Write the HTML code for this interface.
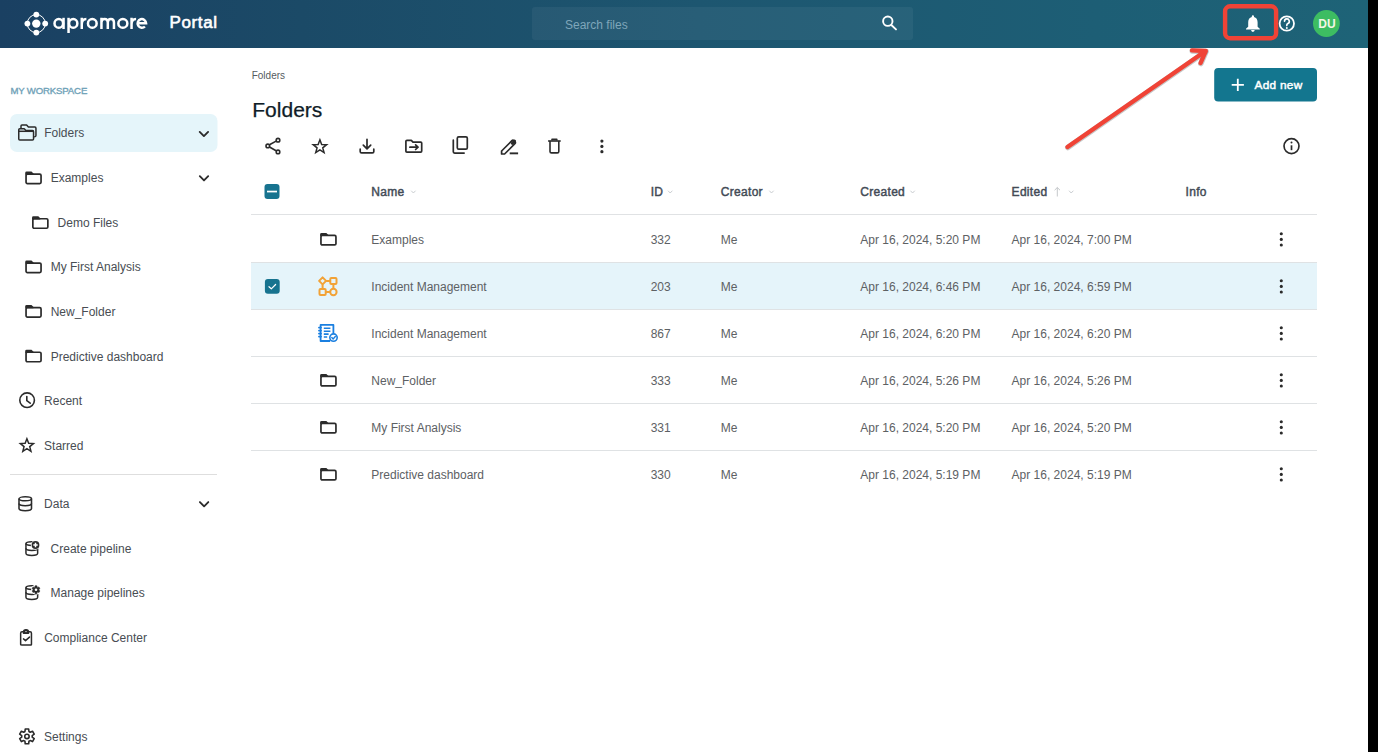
<!DOCTYPE html>
<html><head><meta charset="utf-8"><title>Apromore Portal</title>
<style>
html,body{margin:0;padding:0;}
body{width:1378px;height:752px;overflow:hidden;background:#000;position:relative;font-family:"Liberation Sans",sans-serif;}
.page{position:absolute;left:0;top:0;width:1368px;height:752px;background:#fff;}
.t{position:absolute;white-space:nowrap;}
svg{position:absolute;left:0;top:0;}
</style></head><body>
<div class="page"></div>
<svg width="1378" height="752" viewBox="0 0 1378 752">
<defs><linearGradient id="hg" x1="0" y1="0" x2="1" y2="0"><stop offset="0" stop-color="#1a4062"/><stop offset="0.22" stop-color="#1b4a67"/><stop offset="0.51" stop-color="#1d5670"/><stop offset="0.8" stop-color="#1d5e75"/><stop offset="1" stop-color="#1e6377"/></linearGradient></defs>
<rect x="0" y="0" width="1368" height="48" fill="url(#hg)"/>
<rect x="532" y="7" width="381" height="33" rx="3" fill="#ffffff" fill-opacity="0.05"/>
<g fill="#fff"><circle cx="36.3" cy="23.6" r="4.2"/><circle cx="36.3" cy="14.6" r="2.9"/><circle cx="36.3" cy="32.6" r="2.9"/><circle cx="27.4" cy="23.6" r="2.9"/><circle cx="45.2" cy="23.6" r="2.9"/></g><circle cx="36.3" cy="23.6" r="9" fill="none" stroke="#fff" stroke-width="1"/>
<g fill="none" stroke="#fff" stroke-width="2.5"><ellipse cx="58.8" cy="23.4" rx="4.3" ry="4.35"/><path d="M63.55 17.8 V29.05"/><ellipse cx="73.2" cy="23.4" rx="4.15" ry="4.35"/><path d="M68.55 17.8 V33"/><path d="M81.75 17.8 V29.05 M81.75 24.2 Q81.75 19.05 86.4 19.05"/><ellipse cx="92.3" cy="23.4" rx="4.35" ry="4.35"/><path d="M101.45 17.8 V29.05 M101.45 22.6 Q101.45 19.05 104.6 19.05 Q107.8 19.05 107.8 22.6 V29.05 M107.8 22.6 Q107.8 19.05 110.9 19.05 Q113.95 19.05 113.95 22.6 V29.05"/><ellipse cx="122.85" cy="23.4" rx="4.5" ry="4.35"/><path d="M131.55 17.8 V29.05 M131.55 24.2 Q131.55 19.05 136.1 19.05"/><path d="M137.6 23.3 H146.1 A4.25 4.35 0 1 0 144.9 26.5"/></g>
<g fill="none" stroke="#fff" stroke-width="1.9" stroke-linecap="round"><circle cx="887.8" cy="21.2" r="4.7"/><path d="M891.6 25.2 L896 29.4"/></g>
<path fill="#fff" d="M1252.9 15.2 a1.1 1.1 0 0 1 1.1 1.1 v0.8 c2.4 0.6 3.6 2.6 3.6 5.2 v4.4 l2.2 2.0 v0.7 h-13.8 v-0.7 l2.2 -2.0 v-4.4 c0 -2.6 1.2 -4.6 3.6 -5.2 v-0.8 a1.1 1.1 0 0 1 1.1 -1.1 z M1251.1 30.1 h3.6 a1.8 1.8 0 0 1 -3.6 0 z"/>
<circle cx="1286.8" cy="23.5" r="7.2" fill="none" stroke="#fff" stroke-width="1.8"/><path d="M1284.5 21.3 a2.4 2.4 0 1 1 3.4 2.2 c-0.7 0.4 -1.1 0.9 -1.1 1.6 v0.5" fill="none" stroke="#fff" stroke-width="1.65" stroke-linecap="round"/><circle cx="1286.8" cy="27.9" r="1.0" fill="#fff"/>
<circle cx="1326.4" cy="23.5" r="13.4" fill="#3dbd62"/>
<rect x="1225.1" y="6.3" width="51.0" height="31.9" rx="5" fill="none" stroke="#f04336" stroke-width="4.4"/>
<rect x="10" y="114" width="207.5" height="38" rx="7" fill="#e5f5fa"/>
<rect x="10" y="474" width="207" height="1" fill="#dedede"/>
<g fill="none" stroke="#2b2b2b" stroke-width="1.5" stroke-linejoin="round"><path d="M21.0 128.2 V126.0 Q21.0 125.05 21.95 125.05 H26.6 L28.4 127.1 H34.9 Q35.95 127.1 35.95 128.15 V135.6 Q35.95 136.65 34.9 136.65 H34.2"/><path d="M18.75 138.9 V129.75 Q18.75 128.8 19.7 128.8 H24.2 L25.9 130.6 H32.5 Q33.55 130.6 33.55 131.65 V138.9 Q33.55 139.95 32.5 139.95 H19.8 Q18.75 139.95 18.75 138.9 Z"/><path d="M18.75 131.3 H33.55"/></g>
<path d="M199.70 131.90 L203.90 136.10 L208.10 131.90" fill="none" stroke="#2b2b2b" stroke-width="1.85" stroke-linecap="round" stroke-linejoin="round"/>
<g transform="translate(25.2,171.6)"><path d="M0 3.2 V1.4 Q0 0 1.4 0 H6.3 L8.3 2.0 V3.2 Z" fill="#2b2b2b"/><rect x="0.85" y="2.55" width="15.0" height="9.5" rx="1.3" fill="none" stroke="#2b2b2b" stroke-width="1.7"/></g>
<path d="M199.80 176.20 L204.00 180.40 L208.20 176.20" fill="none" stroke="#2b2b2b" stroke-width="1.85" stroke-linecap="round" stroke-linejoin="round"/>
<g transform="translate(32.0,216.2)"><path d="M0 3.2 V1.4 Q0 0 1.4 0 H6.3 L8.3 2.0 V3.2 Z" fill="#2b2b2b"/><rect x="0.85" y="2.55" width="15.0" height="9.5" rx="1.3" fill="none" stroke="#2b2b2b" stroke-width="1.7"/></g>
<g transform="translate(25.2,260.5)"><path d="M0 3.2 V1.4 Q0 0 1.4 0 H6.3 L8.3 2.0 V3.2 Z" fill="#2b2b2b"/><rect x="0.85" y="2.55" width="15.0" height="9.5" rx="1.3" fill="none" stroke="#2b2b2b" stroke-width="1.7"/></g>
<g transform="translate(25.2,305.1)"><path d="M0 3.2 V1.4 Q0 0 1.4 0 H6.3 L8.3 2.0 V3.2 Z" fill="#2b2b2b"/><rect x="0.85" y="2.55" width="15.0" height="9.5" rx="1.3" fill="none" stroke="#2b2b2b" stroke-width="1.7"/></g>
<g transform="translate(25.2,349.7)"><path d="M0 3.2 V1.4 Q0 0 1.4 0 H6.3 L8.3 2.0 V3.2 Z" fill="#2b2b2b"/><rect x="0.85" y="2.55" width="15.0" height="9.5" rx="1.3" fill="none" stroke="#2b2b2b" stroke-width="1.7"/></g>
<g fill="none" stroke="#2b2b2b" stroke-width="1.6" stroke-linecap="round"><circle cx="27.1" cy="400.2" r="7.3"/><path d="M26.8 396.6 V400.6 L30.2 403.2"/></g>
<polygon points="26.90,438.80 28.66,443.27 33.46,443.57 29.75,446.63 30.96,451.28 26.90,448.70 22.84,451.28 24.05,446.63 20.34,443.57 25.14,443.27" fill="none" stroke="#2b2b2b" stroke-width="1.5" stroke-linejoin="miter" stroke-miterlimit="10"/>
<g transform="translate(18.2,496.0)" fill="none" stroke="#2b2b2b" stroke-width="1.55"><ellipse cx="7.05" cy="2.8" rx="6.25" ry="2.0"/><path d="M0.8 2.8 V12.5 A6.25 2.2 0 0 0 13.3 12.5 V2.8"/><path d="M0.8 7.5 A6.25 2.2 0 0 0 13.3 7.5"/></g>
<path d="M199.90 502.10 L204.10 506.30 L208.30 502.10" fill="none" stroke="#2b2b2b" stroke-width="1.85" stroke-linecap="round" stroke-linejoin="round"/>
<g transform="translate(0,0)" fill="none" stroke="#2b2b2b" stroke-width="1.5"><ellipse cx="31.8" cy="543.55" rx="5.85" ry="1.9"/><path d="M25.95 543.55 V553.2 A5.85 2.2 0 0 0 37.65 553.2 V547.8"/><path d="M25.95 548.3 A5.85 2.2 0 0 0 37.65 548.3"/></g><circle cx="35.5" cy="545.0" r="4.7" fill="#fff"/><circle cx="35.5" cy="545.0" r="3.9" fill="#2b2b2b"/><path d="M35.5 542.8 V547.2 M33.3 545.0 H37.7" stroke="#fff" stroke-width="1.5"/>
<g transform="translate(0,44.0)" fill="none" stroke="#2b2b2b" stroke-width="1.5"><ellipse cx="31.8" cy="543.55" rx="5.85" ry="1.9"/><path d="M25.95 543.55 V553.2 A5.85 2.2 0 0 0 37.65 553.2 V547.8"/><path d="M25.95 548.3 A5.85 2.2 0 0 0 37.65 548.3"/></g><circle cx="36.0" cy="589.75" r="4.9" fill="#fff"/><path d="M34.82 587.10 L35.01 585.77 L36.99 585.77 L37.18 587.10 L37.70 587.40 L38.95 586.90 L39.94 588.62 L38.88 589.45 L38.88 590.05 L39.94 590.88 L38.95 592.60 L37.70 592.10 L37.18 592.40 L36.99 593.73 L35.01 593.73 L34.82 592.40 L34.30 592.10 L33.05 592.60 L32.06 590.88 L33.12 590.05 L33.12 589.45 L32.06 588.62 L33.05 586.90 L34.30 587.40 Z" fill="#2b2b2b" stroke="#2b2b2b" stroke-width="0.5" stroke-linejoin="round"/><circle cx="36.0" cy="589.75" r="1.3" fill="#fff"/>
<g transform="translate(19.9,629)" fill="none" stroke="#2b2b2b" stroke-width="1.5" stroke-linejoin="round" stroke-linecap="round"><path d="M3.6 2.85 H2.1 Q0.75 2.85 0.75 4.2 V15.4 Q0.75 16.1 2.1 16.1 H10.9 Q11.55 16.1 11.55 15.4 V4.2 Q11.55 2.85 10.2 2.85 H8.6"/><path d="M3.6 4.2 V3.2 Q3.6 0.75 6.1 0.75 Q8.6 0.75 8.6 3.2 V4.2 Z" fill="#2b2b2b"/><circle cx="6.1" cy="2.6" r="0.7" fill="#fff" stroke="none"/><path d="M3.6 9.9 L5.6 11.6 L9.6 8.1"/></g>
<path d="M24.96 731.49 L25.24 728.99 L28.66 728.99 L28.94 731.49 L30.21 732.22 L32.51 731.22 L34.22 734.18 L32.20 735.66 L32.20 737.14 L34.22 738.62 L32.51 741.58 L30.21 740.58 L28.94 741.31 L28.66 743.81 L25.24 743.81 L24.96 741.31 L23.69 740.58 L21.39 741.58 L19.68 738.62 L21.70 737.14 L21.70 735.66 L19.68 734.18 L21.39 731.22 L23.69 732.22 Z" fill="none" stroke="#2b2b2b" stroke-width="1.6" stroke-linejoin="round"/>
<circle cx="26.95" cy="736.4" r="2.2" fill="none" stroke="#2b2b2b" stroke-width="1.6"/>
<rect x="1214.2" y="68" width="102.8" height="33.5" rx="4" fill="#13768f"/>
<path d="M1237.8 78.8 V91 M1231.7 84.9 H1243.9" stroke="#fff" stroke-width="1.8"/>
<g stroke="#000" stroke-opacity="0.22" stroke-width="5.6" stroke-linecap="round" stroke-linejoin="round" fill="none" transform="translate(0.3,0.5)"><path d="M1067.5 147 L1204.5 51.8"/><path d="M1192 50.4 L1205.8 51.0 L1200.6 63.0"/></g>
<g stroke="#f04336" stroke-width="4.4" stroke-linecap="round" stroke-linejoin="round" fill="none"><path d="M1067.5 147 L1204.5 51.8"/><path d="M1192 50.4 L1205.8 51.0 L1200.6 63.0"/></g>
<g fill="none" stroke="#2b2b2b" stroke-width="1.6"><circle cx="267.8" cy="145.9" r="1.8"/><circle cx="278.0" cy="140.2" r="1.8"/><circle cx="278.0" cy="151.9" r="1.8"/><path d="M269.5 144.8 L276.1 141.1 M269.5 147.0 L276.1 150.8"/></g>
<polygon points="319.90,139.80 321.66,144.47 326.65,144.71 322.75,147.83 324.07,152.64 319.90,149.90 315.73,152.64 317.05,147.83 313.15,144.71 318.14,144.47" fill="none" stroke="#2b2b2b" stroke-width="1.5" stroke-linejoin="miter" stroke-miterlimit="10"/>
<g fill="none" stroke="#2b2b2b" stroke-width="1.7" stroke-linecap="round" stroke-linejoin="round"><path d="M367 139.3 V148.6 M363.3 145.2 L367 148.9 L370.7 145.2"/><path d="M360.2 149.2 V151.4 Q360.2 152.8 361.6 152.8 H372.4 Q373.8 152.8 373.8 151.4 V149.2"/></g>
<g fill="none" stroke="#2b2b2b" stroke-width="1.7" stroke-linejoin="round" stroke-linecap="round"><path d="M405.9 151.2 V141.3 Q405.9 140.3 406.9 140.3 H411.3 L413 142.1 H420.7 Q421.7 142.1 421.7 143.1 V151 Q421.7 152.1 420.7 152.1 H406.9 Q405.9 152.1 405.9 151.2 Z"/><path d="M409.9 147.2 H418 M415.6 144.9 L418 147.2 L415.6 149.5"/></g>
<g fill="none" stroke="#2b2b2b" stroke-width="1.7" stroke-linejoin="round"><rect x="457.3" y="136.9" width="10" height="12.2" rx="1.4"/><path d="M453.3 140.2 V151.8 Q453.3 153.1 454.6 153.1 H464.1" stroke-linecap="round"/></g>
<g fill="none" stroke="#2b2b2b" stroke-width="1.7" stroke-linejoin="round"><path d="M501.6 154 V151.0 L511.9 140.7 Q512.9 139.7 513.9 140.7 L514.9 141.7 Q515.9 142.7 514.9 143.7 L504.6 154 Z"/></g><rect x="509.7" y="152.4" width="8.4" height="1.9" fill="#2b2b2b"/><path d="M512.3 143.3 L514.5 141.1" stroke="#2b2b2b" stroke-width="3.0" stroke-linecap="round"/>
<g fill="none" stroke="#2b2b2b" stroke-width="1.6" stroke-linejoin="round"><path d="M548.1 141.0 H560.7"/><path d="M550.0 141.0 V151.4 Q550.0 152.9 551.5 152.9 H557.3 Q558.8 152.9 558.8 151.4 V141.0"/><path d="M552 140.6 V139.4 H556.8 V140.6"/></g>
<g fill="#2b2b2b"><circle cx="601.9" cy="141.1" r="1.6"/><circle cx="601.9" cy="146.4" r="1.6"/><circle cx="601.9" cy="151.7" r="1.6"/></g>
<g><circle cx="1291.5" cy="146.1" r="7.5" fill="none" stroke="#2b2b2b" stroke-width="1.65"/><circle cx="1291.5" cy="142.6" r="1.0" fill="#2b2b2b"/><path d="M1291.5 145.3 V150.2" stroke="#2b2b2b" stroke-width="1.7"/></g>
<rect x="264.5" y="184" width="15" height="15" rx="3" fill="#17738f"/><rect x="267.0" y="190.7" width="10.0" height="1.7" fill="#fff"/>
<path d="M411.50 191.00 L413.40 193.00 L415.30 191.00" fill="none" stroke="#c3c7cb" stroke-width="0.9" stroke-linecap="round" stroke-linejoin="round"/>
<path d="M668.30 191.00 L670.20 193.00 L672.10 191.00" fill="none" stroke="#c3c7cb" stroke-width="0.9" stroke-linecap="round" stroke-linejoin="round"/>
<path d="M769.60 191.00 L771.50 193.00 L773.40 191.00" fill="none" stroke="#c3c7cb" stroke-width="0.9" stroke-linecap="round" stroke-linejoin="round"/>
<path d="M910.70 191.00 L912.60 193.00 L914.50 191.00" fill="none" stroke="#c3c7cb" stroke-width="0.9" stroke-linecap="round" stroke-linejoin="round"/>
<path d="M1069.30 191.00 L1071.20 193.00 L1073.10 191.00" fill="none" stroke="#c3c7cb" stroke-width="0.9" stroke-linecap="round" stroke-linejoin="round"/>
<path d="M1057.3 187.5 V196.5 M1054.6 190.2 L1057.3 187.5 L1060 190.2" fill="none" stroke="#c5c8cb" stroke-width="1.0"/>
<rect x="251" y="214" width="1066" height="1" fill="#e0e2e4"/>
<rect x="251" y="263" width="1066" height="46" fill="#e5f4fa"/>
<rect x="251" y="262" width="1066" height="1" fill="#dfe2e4"/>
<rect x="251" y="309" width="1066" height="1" fill="#dfe2e4"/>
<rect x="251" y="356" width="1066" height="1" fill="#dfe2e4"/>
<rect x="251" y="403" width="1066" height="1" fill="#dfe2e4"/>
<rect x="251" y="450" width="1066" height="1" fill="#dfe2e4"/>
<rect x="264.9" y="279" width="14.8" height="14.8" rx="3" fill="#17738f"/><path d="M269.0 286.7 L271.3 288.8 L275.6 284.5" fill="none" stroke="#fff" stroke-width="1.2" stroke-linecap="round" stroke-linejoin="round"/>
<g transform="translate(320.1,232.9)"><path d="M0 3.2 V1.4 Q0 0 1.4 0 H6.3 L8.3 2.0 V3.2 Z" fill="#2b2b2b"/><rect x="0.85" y="2.55" width="15.0" height="9.5" rx="1.3" fill="none" stroke="#2b2b2b" stroke-width="1.7"/></g>
<g fill="#2b2b2b"><circle cx="1281.3" cy="233.80" r="1.55"/><circle cx="1281.3" cy="239.40" r="1.55"/><circle cx="1281.3" cy="245.00" r="1.55"/></g>
<g transform="translate(0,0.00)" fill="none" stroke="#f2a236" stroke-width="2.0"><path d="M322.6 277.4 L326.1 280.9 L322.6 284.4 L319.1 280.9 Z" stroke-linejoin="round"/><rect x="330.3" y="277.9" width="6.2" height="6.2" rx="1"/><rect x="319.5" y="288.9" width="6.2" height="6.2" rx="1"/><circle cx="333.4" cy="292.0" r="3.2"/><path d="M326.1 280.95 H330.3 M322.6 284.4 V288.9 M333.4 284.1 V288.8 M325.7 292.0 H330.2"/></g>
<g fill="#2b2b2b"><circle cx="1281.3" cy="280.80" r="1.55"/><circle cx="1281.3" cy="286.40" r="1.55"/><circle cx="1281.3" cy="292.00" r="1.55"/></g>
<g transform="translate(0,0.00)" fill="none" stroke="#1a7fe0"><path d="M330.2 341.0 H320.6 V324.9 H333.4 V333.2" stroke-width="1.8" stroke-linejoin="round"/><path d="M319.0 327.6 H321.0 M319.0 330.6 H321.0 M319.0 333.6 H321.0 M319.0 336.6 H321.0" stroke-width="1.9" stroke-linecap="round"/><path d="M323.8 328.3 H330.4 M323.8 331.2 H330.4 M323.8 334.1 H328.6 M323.8 337.0 H327.2" stroke-width="1.6"/><circle cx="333.5" cy="337.6" r="3.7" fill="#fff" stroke-width="1.6"/><path d="M331.8 337.6 L333.1 338.9 L335.3 336.6" stroke-width="1.4" stroke-linecap="round" stroke-linejoin="round"/></g>
<g fill="#2b2b2b"><circle cx="1281.3" cy="327.80" r="1.55"/><circle cx="1281.3" cy="333.40" r="1.55"/><circle cx="1281.3" cy="339.00" r="1.55"/></g>
<g transform="translate(320.1,373.9)"><path d="M0 3.2 V1.4 Q0 0 1.4 0 H6.3 L8.3 2.0 V3.2 Z" fill="#2b2b2b"/><rect x="0.85" y="2.55" width="15.0" height="9.5" rx="1.3" fill="none" stroke="#2b2b2b" stroke-width="1.7"/></g>
<g fill="#2b2b2b"><circle cx="1281.3" cy="374.80" r="1.55"/><circle cx="1281.3" cy="380.40" r="1.55"/><circle cx="1281.3" cy="386.00" r="1.55"/></g>
<g transform="translate(320.1,420.9)"><path d="M0 3.2 V1.4 Q0 0 1.4 0 H6.3 L8.3 2.0 V3.2 Z" fill="#2b2b2b"/><rect x="0.85" y="2.55" width="15.0" height="9.5" rx="1.3" fill="none" stroke="#2b2b2b" stroke-width="1.7"/></g>
<g fill="#2b2b2b"><circle cx="1281.3" cy="421.80" r="1.55"/><circle cx="1281.3" cy="427.40" r="1.55"/><circle cx="1281.3" cy="433.00" r="1.55"/></g>
<g transform="translate(320.1,467.9)"><path d="M0 3.2 V1.4 Q0 0 1.4 0 H6.3 L8.3 2.0 V3.2 Z" fill="#2b2b2b"/><rect x="0.85" y="2.55" width="15.0" height="9.5" rx="1.3" fill="none" stroke="#2b2b2b" stroke-width="1.7"/></g>
<g fill="#2b2b2b"><circle cx="1281.3" cy="468.80" r="1.55"/><circle cx="1281.3" cy="474.40" r="1.55"/><circle cx="1281.3" cy="480.00" r="1.55"/></g>
</svg>
<div class="t" style="left:169.60px;top:11.81px;font-size:17px;line-height:22px;color:#ffffff;font-weight:400;letter-spacing:0.6px;-webkit-text-stroke:0.6px #fff">Portal</div>
<div class="t" style="left:565.00px;top:16.54px;font-size:12px;line-height:16px;color:#7fa6ba;font-weight:400;">Search files</div>
<div class="t" style="left:1318.30px;top:15.64px;font-size:12px;line-height:16px;color:#f4f6e4;font-weight:700;">DU</div>
<div class="t" style="left:10.40px;top:85.37px;font-size:9.6px;line-height:12px;color:#70a2b8;font-weight:400;letter-spacing:-0.15px;-webkit-text-stroke:0.35px #70a2b8">MY WORKSPACE</div>
<div class="t" style="left:44.20px;top:125.44px;font-size:12px;line-height:16px;color:#484d53;font-weight:400;">Folders</div>
<div class="t" style="left:50.70px;top:170.14px;font-size:12px;line-height:16px;color:#484d53;font-weight:400;">Examples</div>
<div class="t" style="left:57.60px;top:214.54px;font-size:12px;line-height:16px;color:#484d53;font-weight:400;">Demo Files</div>
<div class="t" style="left:50.70px;top:259.34px;font-size:12px;line-height:16px;color:#484d53;font-weight:400;">My First Analysis</div>
<div class="t" style="left:50.70px;top:303.94px;font-size:12px;line-height:16px;color:#484d53;font-weight:400;">New_Folder</div>
<div class="t" style="left:50.70px;top:348.54px;font-size:12px;line-height:16px;color:#484d53;font-weight:400;">Predictive dashboard</div>
<div class="t" style="left:44.10px;top:392.94px;font-size:12px;line-height:16px;color:#484d53;font-weight:400;">Recent</div>
<div class="t" style="left:44.10px;top:437.54px;font-size:12px;line-height:16px;color:#484d53;font-weight:400;">Starred</div>
<div class="t" style="left:44.10px;top:496.24px;font-size:12px;line-height:16px;color:#484d53;font-weight:400;">Data</div>
<div class="t" style="left:50.60px;top:540.64px;font-size:12px;line-height:16px;color:#484d53;font-weight:400;">Create pipeline</div>
<div class="t" style="left:50.60px;top:585.24px;font-size:12px;line-height:16px;color:#484d53;font-weight:400;">Manage pipelines</div>
<div class="t" style="left:44.20px;top:629.84px;font-size:12px;line-height:16px;color:#484d53;font-weight:400;">Compliance Center</div>
<div class="t" style="left:44.10px;top:728.64px;font-size:12px;line-height:16px;color:#484d53;font-weight:400;">Settings</div>
<div class="t" style="left:251.70px;top:68.83px;font-size:10px;line-height:13px;color:#555a60;font-weight:400;">Folders</div>
<div class="t" style="left:252.30px;top:96.12px;font-size:21px;line-height:27px;color:#0f1c27;font-weight:400;-webkit-text-stroke:0.25px #0f1c27">Folders</div>
<div class="t" style="left:1254.50px;top:77.91px;font-size:11.8px;line-height:15px;color:#ffffff;font-weight:400;letter-spacing:0.3px;-webkit-text-stroke:0.45px #fff">Add new</div>
<div class="t" style="left:371.30px;top:183.84px;font-size:12px;line-height:16px;color:#434b56;font-weight:400;letter-spacing:0.3px;-webkit-text-stroke:0.45px #434b56">Name</div>
<div class="t" style="left:650.70px;top:183.84px;font-size:12px;line-height:16px;color:#434b56;font-weight:400;letter-spacing:0.3px;-webkit-text-stroke:0.45px #434b56">ID</div>
<div class="t" style="left:720.80px;top:183.84px;font-size:12px;line-height:16px;color:#434b56;font-weight:400;letter-spacing:0.3px;-webkit-text-stroke:0.45px #434b56">Creator</div>
<div class="t" style="left:860.30px;top:183.84px;font-size:12px;line-height:16px;color:#434b56;font-weight:400;letter-spacing:0.3px;-webkit-text-stroke:0.45px #434b56">Created</div>
<div class="t" style="left:1011.60px;top:183.84px;font-size:12px;line-height:16px;color:#434b56;font-weight:400;letter-spacing:0.3px;-webkit-text-stroke:0.45px #434b56">Edited</div>
<div class="t" style="left:1185.60px;top:183.84px;font-size:12px;line-height:16px;color:#434b56;font-weight:400;letter-spacing:0.3px;-webkit-text-stroke:0.45px #434b56">Info</div>
<div class="t" style="left:371.30px;top:231.94px;font-size:12px;line-height:16px;color:#5d6164;font-weight:400;">Examples</div>
<div class="t" style="left:650.70px;top:231.94px;font-size:12px;line-height:16px;color:#5d6164;font-weight:400;">332</div>
<div class="t" style="left:720.80px;top:231.94px;font-size:12px;line-height:16px;color:#5d6164;font-weight:400;">Me</div>
<div class="t" style="left:860.30px;top:231.94px;font-size:12px;line-height:16px;color:#5d6164;font-weight:400;">Apr 16, 2024, 5:20 PM</div>
<div class="t" style="left:1011.60px;top:231.94px;font-size:12px;line-height:16px;color:#5d6164;font-weight:400;">Apr 16, 2024, 7:00 PM</div>
<div class="t" style="left:371.30px;top:278.94px;font-size:12px;line-height:16px;color:#5d6164;font-weight:400;">Incident Management</div>
<div class="t" style="left:650.70px;top:278.94px;font-size:12px;line-height:16px;color:#5d6164;font-weight:400;">203</div>
<div class="t" style="left:720.80px;top:278.94px;font-size:12px;line-height:16px;color:#5d6164;font-weight:400;">Me</div>
<div class="t" style="left:860.30px;top:278.94px;font-size:12px;line-height:16px;color:#5d6164;font-weight:400;">Apr 16, 2024, 6:46 PM</div>
<div class="t" style="left:1011.60px;top:278.94px;font-size:12px;line-height:16px;color:#5d6164;font-weight:400;">Apr 16, 2024, 6:59 PM</div>
<div class="t" style="left:371.30px;top:325.94px;font-size:12px;line-height:16px;color:#5d6164;font-weight:400;">Incident Management</div>
<div class="t" style="left:650.70px;top:325.94px;font-size:12px;line-height:16px;color:#5d6164;font-weight:400;">867</div>
<div class="t" style="left:720.80px;top:325.94px;font-size:12px;line-height:16px;color:#5d6164;font-weight:400;">Me</div>
<div class="t" style="left:860.30px;top:325.94px;font-size:12px;line-height:16px;color:#5d6164;font-weight:400;">Apr 16, 2024, 6:20 PM</div>
<div class="t" style="left:1011.60px;top:325.94px;font-size:12px;line-height:16px;color:#5d6164;font-weight:400;">Apr 16, 2024, 6:20 PM</div>
<div class="t" style="left:371.30px;top:372.94px;font-size:12px;line-height:16px;color:#5d6164;font-weight:400;">New_Folder</div>
<div class="t" style="left:650.70px;top:372.94px;font-size:12px;line-height:16px;color:#5d6164;font-weight:400;">333</div>
<div class="t" style="left:720.80px;top:372.94px;font-size:12px;line-height:16px;color:#5d6164;font-weight:400;">Me</div>
<div class="t" style="left:860.30px;top:372.94px;font-size:12px;line-height:16px;color:#5d6164;font-weight:400;">Apr 16, 2024, 5:26 PM</div>
<div class="t" style="left:1011.60px;top:372.94px;font-size:12px;line-height:16px;color:#5d6164;font-weight:400;">Apr 16, 2024, 5:26 PM</div>
<div class="t" style="left:371.30px;top:419.94px;font-size:12px;line-height:16px;color:#5d6164;font-weight:400;">My First Analysis</div>
<div class="t" style="left:650.70px;top:419.94px;font-size:12px;line-height:16px;color:#5d6164;font-weight:400;">331</div>
<div class="t" style="left:720.80px;top:419.94px;font-size:12px;line-height:16px;color:#5d6164;font-weight:400;">Me</div>
<div class="t" style="left:860.30px;top:419.94px;font-size:12px;line-height:16px;color:#5d6164;font-weight:400;">Apr 16, 2024, 5:20 PM</div>
<div class="t" style="left:1011.60px;top:419.94px;font-size:12px;line-height:16px;color:#5d6164;font-weight:400;">Apr 16, 2024, 5:20 PM</div>
<div class="t" style="left:371.30px;top:466.94px;font-size:12px;line-height:16px;color:#5d6164;font-weight:400;">Predictive dashboard</div>
<div class="t" style="left:650.70px;top:466.94px;font-size:12px;line-height:16px;color:#5d6164;font-weight:400;">330</div>
<div class="t" style="left:720.80px;top:466.94px;font-size:12px;line-height:16px;color:#5d6164;font-weight:400;">Me</div>
<div class="t" style="left:860.30px;top:466.94px;font-size:12px;line-height:16px;color:#5d6164;font-weight:400;">Apr 16, 2024, 5:19 PM</div>
<div class="t" style="left:1011.60px;top:466.94px;font-size:12px;line-height:16px;color:#5d6164;font-weight:400;">Apr 16, 2024, 5:19 PM</div>
</body></html>
